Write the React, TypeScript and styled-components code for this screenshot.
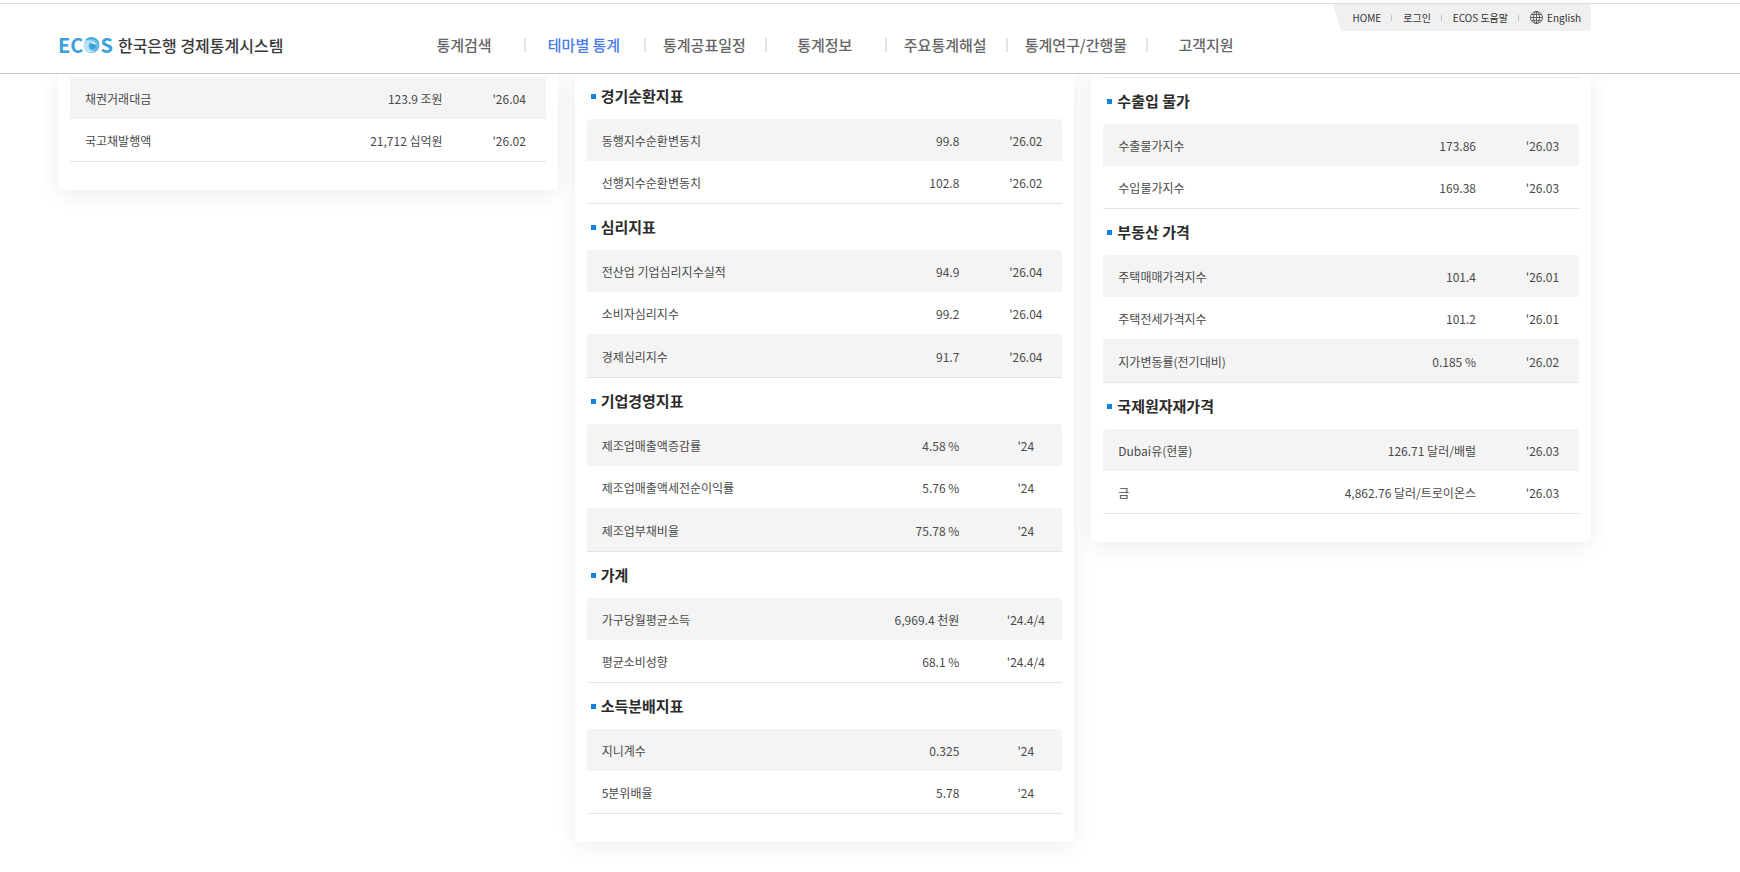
import React from "react";
import styled, { createGlobalStyle } from "styled-components";

const GlobalStyle = createGlobalStyle`
  * { box-sizing: border-box; }
  body {
    margin: 0;
    background: #fff;
    color: #4a4a4a;
    font-family: "Noto Sans CJK KR", "Noto Sans", sans-serif;
    font-size: 12px;
    line-height: 18px;
  }
  a { color: inherit; text-decoration: none; }
`;

const Header = styled.header`
  position: sticky;
  top: 0;
  z-index: 10;
  padding-top: 3px;
  background: #fff;
  border-bottom: 1px solid #c8c8c8;
`;

const HeaderInner = styled.div`
  padding: 0 149px 14px 58px;
  border-top: 1px solid #ddd;
`;

const UtilityRow = styled.div`
  display: flex;
  justify-content: flex-end;
`;

const UtilityList = styled.ul`
  position: relative;
  display: flex;
  align-items: center;
  height: 27px;
  margin: 0;
  padding: 0 10px 0 12px;
  list-style: none;
  font-size: 10px;
  line-height: 14px;
  color: #333;
  background: #f0f0f0;
  border-radius: 0 0 4px 0;

  &::before {
    content: "";
    position: absolute;
    z-index: -1;
    top: 0;
    bottom: 0;
    left: -4px;
    width: 20px;
    background: #f0f0f0;
    border-radius: 0 0 0 4px;
    transform: skewX(18deg);
  }
`;

const UtilityItem = styled.li`
  display: flex;
  align-items: center;

  & + &::before {
    content: "";
    width: 1px;
    height: 6px;
    margin: 0 11px 0 10px;
    background: #c4c4c4;
  }
`;

const UtilityLink = styled.a`
  display: flex;
  align-items: center;
  gap: 4px;
`;

const MainRow = styled.div`
  display: flex;
  align-items: center;
  height: 28px;
`;

const Logo = styled.a`
  display: flex;
  flex: 0 0 346px;
  align-items: center;
  gap: 5px;
  white-space: nowrap;
`;

const LogoMark = styled.span`
  display: flex;
  align-items: center;
  font-size: 20px;
  line-height: 28px;
  font-weight: 700;
  color: #3ba0da;
`;

const LogoName = styled.span`
  font-size: 16px;
  line-height: 28px;
  font-weight: 500;
  color: #3a3a3a;
`;

const NavList = styled.ul`
  display: flex;
  margin: 0;
  padding: 0;
  list-style: none;
`;

const NavItem = styled.li`
  position: relative;
  display: flex;
  align-items: center;
  justify-content: center;
  min-width: 120px;
  padding: 0 19px;

  & + &::before {
    content: "";
    position: absolute;
    left: 0;
    width: 2px;
    height: 14px;
    background: #e4e4e4;
  }
`;

const NavLink = styled.a<{ $active?: boolean }>`
  font-size: 15px;
  line-height: 28px;
  font-weight: 500;
  white-space: nowrap;
  color: ${(p) => (p.$active ? "#4a7bea" : "#666")};
`;

const Columns = styled.main`
  display: grid;
  grid-template-columns: repeat(3, minmax(0, 1fr));
  gap: 17px;
  align-items: start;
  margin-top: -1px;
  padding: 0 149px 30px 58px;
`;

const Card = styled.div<{ $top: number }>`
  padding: ${(p) => p.$top}px 12px 28px;
  background: #fff;
  border-radius: 0 0 5px 5px;
  box-shadow: 0 4px 20px rgba(40, 50, 100, 0.09);
`;

const Section = styled.section<{ $ruled?: boolean }>`
  border-top: ${(p) => (p.$ruled ? "1px solid #e4e4e4" : "0")};
  border-bottom: 1px solid #e4e4e4;
`;

const SectionTitle = styled.h2`
  display: flex;
  align-items: center;
  gap: 5px;
  height: 46px;
  margin: 0;
  padding-left: 4px;
  font-size: 15px;
  line-height: 22px;
  font-weight: 700;
  color: #2b2b2b;

  &::before {
    content: "";
    width: 5px;
    height: 5px;
    background: #0f83e6;
  }
`;

const StatTable = styled.table`
  width: 100%;
  border-collapse: separate;
  border-spacing: 0;
`;

const StatRow = styled.tr`
  height: 42px;

  &:nth-child(odd) > * { background: #f4f4f4; }
  &:first-child > :first-child { border-top-left-radius: 4px; }
  &:first-child > :last-child { border-top-right-radius: 4px; }
  &:last-child:nth-child(odd) { height: 43px; }
`;

const NameCell = styled.th`
  padding: 2px 0 0 15px;
  font-weight: 400;
  text-align: left;
`;

const ValueCell = styled.td`
  padding: 2px 30px 0 0;
  text-align: right;
  white-space: nowrap;
`;

const DateCell = styled.td`
  width: 73px;
  padding: 2px 0 0;
  text-align: center;
  white-space: nowrap;
`;

type Stat = [name: string, value: string, date: string];
interface Group { title?: string; ruled?: boolean; rows: Stat[] }
interface Column { top: number; groups: Group[] }

const columns: Column[] = [
  {
    top: 4,
    groups: [
      { rows: [["채권거래대금", "123.9 조원", "'26.04"], ["국고채발행액", "21,712 십억원", "'26.02"]] },
    ],
  },
  {
    top: 0,
    groups: [
      { title: "경기순환지표", rows: [["동행지수순환변동치", "99.8", "'26.02"], ["선행지수순환변동치", "102.8", "'26.02"]] },
      { title: "심리지표", rows: [["전산업 기업심리지수실적", "94.9", "'26.04"], ["소비자심리지수", "99.2", "'26.04"], ["경제심리지수", "91.7", "'26.04"]] },
      { title: "기업경영지표", rows: [["제조업매출액증감률", "4.58 %", "'24"], ["제조업매출액세전순이익률", "5.76 %", "'24"], ["제조업부채비율", "75.78 %", "'24"]] },
      { title: "가계", rows: [["가구당월평균소득", "6,969.4 천원", "'24.4/4"], ["평균소비성향", "68.1 %", "'24.4/4"]] },
      { title: "소득분배지표", rows: [["지니계수", "0.325", "'24"], ["5분위배율", "5.78", "'24"]] },
    ],
  },
  {
    top: 4,
    groups: [
      { title: "수출입 물가", ruled: true, rows: [["수출물가지수", "173.86", "'26.03"], ["수입물가지수", "169.38", "'26.03"]] },
      { title: "부동산 가격", rows: [["주택매매가격지수", "101.4", "'26.01"], ["주택전세가격지수", "101.2", "'26.01"], ["지가변동률(전기대비)", "0.185 %", "'26.02"]] },
      { title: "국제원자재가격", rows: [["Dubai유(현물)", "126.71 달러/배럴", "'26.03"], ["금", "4,862.76 달러/트로이온스", "'26.03"]] },
    ],
  },
];

const navItems = ["통계검색", "테마별 통계", "통계공표일정", "통계정보", "주요통계해설", "통계연구/간행물", "고객지원"];

const EyeIcon = () => (
  <svg width="17" height="18" viewBox="0 0 17 18" aria-hidden="true">
    <defs>
      <linearGradient id="eye" x1="0" y1="0" x2="1" y2="1">
        <stop offset="0" stopColor="#d4effb" />
        <stop offset="0.5" stopColor="#7cc6ea" />
        <stop offset="1" stopColor="#4aabdf" />
      </linearGradient>
    </defs>
    <circle cx="8.5" cy="9" r="8" fill="url(#eye)" />
    <path d="M3 3C8 -.5 15 1.500 16.500 8C13.500 4 9 2.500 3 4.500Z" fill="#49a9dd" />
    <path d="M.5 9.500C2 6 6 4.500 10 5C6.500 6 5 8 5.500 11C6 14 8 15 12 15C7 18.500 1 15 .5 9.500Z" fill="#b9e3f6" />
    <circle cx="9.500" cy="9.500" r="3.500" fill="#3c9fd9" />
    <path d="M7 7.500C9 5 13 6 13 9C11.500 7.800 9.500 7.600 7 7.500Z" fill="#e4f5fc" />
  </svg>
);

const GlobeIcon = () => (
  <svg width="13" height="13" viewBox="0 0 13 13" fill="none" stroke="#555" strokeWidth="0.9" aria-hidden="true">
    <circle cx="6.5" cy="6.5" r="6" />
    <ellipse cx="6.5" cy="6.5" rx="3" ry="6" />
    <path d="M6.5 .5V12.5M.5 6.5H12.5M1.8 3.5H11.2M1.8 9.5H11.2" />
  </svg>
);

const StatGroup = ({ title, ruled, rows }: Group) => (
  <Section $ruled={ruled}>
    {title && <SectionTitle>{title}</SectionTitle>}
    <StatTable>
      <tbody>
        {rows.map(([name, value, date]) => (
          <StatRow key={name}>
            <NameCell scope="row">{name}</NameCell>
            <ValueCell>{value}</ValueCell>
            <DateCell>{date}</DateCell>
          </StatRow>
        ))}
      </tbody>
    </StatTable>
  </Section>
);

export default function App() {
  return (
    <>
      <GlobalStyle />
      <Header>
        <HeaderInner>
          <UtilityRow>
            <UtilityList>
              <UtilityItem><UtilityLink href="#home">HOME</UtilityLink></UtilityItem>
              <UtilityItem><UtilityLink href="#login">로그인</UtilityLink></UtilityItem>
              <UtilityItem><UtilityLink href="#help">ECOS 도움말</UtilityLink></UtilityItem>
              <UtilityItem><UtilityLink href="#english"><GlobeIcon />English</UtilityLink></UtilityItem>
            </UtilityList>
          </UtilityRow>
          <MainRow>
            <Logo href="#main">
              <LogoMark>EC<EyeIcon />S</LogoMark>
              <LogoName>한국은행 경제통계시스템</LogoName>
            </Logo>
            <nav>
              <NavList>
                {navItems.map((label, i) => (
                  <NavItem key={label}>
                    <NavLink href={`#menu-${i + 1}`} $active={i === 1}>{label}</NavLink>
                  </NavItem>
                ))}
              </NavList>
            </nav>
          </MainRow>
        </HeaderInner>
      </Header>
      <Columns>
        {columns.map((column, i) => (
          <Card key={i} $top={column.top}>
            {column.groups.map((group, j) => (
              <StatGroup key={j} {...group} />
            ))}
          </Card>
        ))}
      </Columns>
    </>
  );
}
